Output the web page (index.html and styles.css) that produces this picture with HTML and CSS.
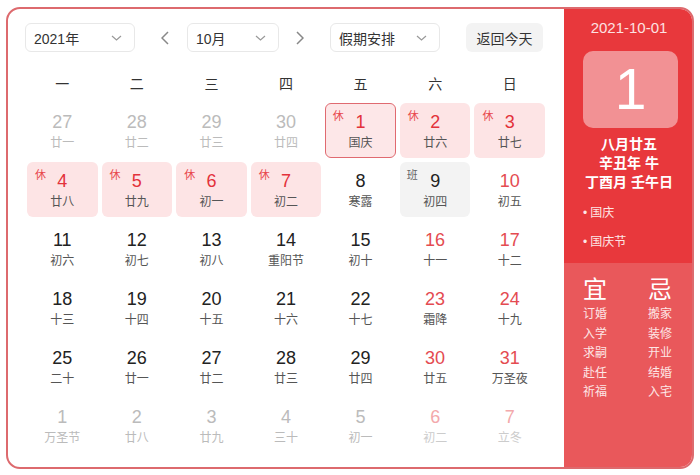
FILE: index.html
```html
<!DOCTYPE html>
<html lang="zh-CN">
<head>
<meta charset="utf-8">
<title>万年历</title>
<link rel="stylesheet" href="styles.css">
</head>
<body>
<div class="cal">
  <div class="main">
    <div class="toolbar">
      <div class="select sel-year"><span>2021年</span><svg class="chev" width="11" height="6" viewBox="0 0 11 6"><path d="M1 1L5.5 5L10 1"/></svg></div>
      <div class="arrow arrow-prev"><svg width="8" height="14" viewBox="0 0 8 14"><path d="M7 1L1 7L7 13"/></svg></div>
      <div class="select sel-month"><span>10月</span><svg class="chev" width="11" height="6" viewBox="0 0 11 6"><path d="M1 1L5.5 5L10 1"/></svg></div>
      <div class="arrow arrow-next"><svg width="8" height="14" viewBox="0 0 8 14"><path d="M1 1L7 7L1 13"/></svg></div>
      <div class="select sel-holiday"><span>假期安排</span><svg class="chev" width="11" height="6" viewBox="0 0 11 6"><path d="M1 1L5.5 5L10 1"/></svg></div>
      <div class="btn-today">返回今天</div>
    </div>
    <div class="weekdays">
      <span>一</span><span>二</span><span>三</span><span>四</span><span>五</span><span>六</span><span>日</span>
    </div>
    <div class="grid">
      <div class="cell other"><span class="num">27</span><span class="lunar">廿一</span></div>
      <div class="cell other"><span class="num">28</span><span class="lunar">廿二</span></div>
      <div class="cell other"><span class="num">29</span><span class="lunar">廿三</span></div>
      <div class="cell other"><span class="num">30</span><span class="lunar">廿四</span></div>
      <div class="cell rest today"><span class="tag">休</span><span class="num">1</span><span class="lunar">国庆</span></div>
      <div class="cell rest"><span class="tag">休</span><span class="num">2</span><span class="lunar">廿六</span></div>
      <div class="cell rest"><span class="tag">休</span><span class="num">3</span><span class="lunar">廿七</span></div>

      <div class="cell rest"><span class="tag">休</span><span class="num">4</span><span class="lunar">廿八</span></div>
      <div class="cell rest"><span class="tag">休</span><span class="num">5</span><span class="lunar">廿九</span></div>
      <div class="cell rest"><span class="tag">休</span><span class="num">6</span><span class="lunar">初一</span></div>
      <div class="cell rest"><span class="tag">休</span><span class="num">7</span><span class="lunar">初二</span></div>
      <div class="cell"><span class="num">8</span><span class="lunar">寒露</span></div>
      <div class="cell work"><span class="tag">班</span><span class="num">9</span><span class="lunar">初四</span></div>
      <div class="cell wkend"><span class="num">10</span><span class="lunar">初五</span></div>

      <div class="cell"><span class="num">11</span><span class="lunar">初六</span></div>
      <div class="cell"><span class="num">12</span><span class="lunar">初七</span></div>
      <div class="cell"><span class="num">13</span><span class="lunar">初八</span></div>
      <div class="cell"><span class="num">14</span><span class="lunar">重阳节</span></div>
      <div class="cell"><span class="num">15</span><span class="lunar">初十</span></div>
      <div class="cell wkend"><span class="num">16</span><span class="lunar">十一</span></div>
      <div class="cell wkend"><span class="num">17</span><span class="lunar">十二</span></div>

      <div class="cell"><span class="num">18</span><span class="lunar">十三</span></div>
      <div class="cell"><span class="num">19</span><span class="lunar">十四</span></div>
      <div class="cell"><span class="num">20</span><span class="lunar">十五</span></div>
      <div class="cell"><span class="num">21</span><span class="lunar">十六</span></div>
      <div class="cell"><span class="num">22</span><span class="lunar">十七</span></div>
      <div class="cell wkend"><span class="num">23</span><span class="lunar">霜降</span></div>
      <div class="cell wkend"><span class="num">24</span><span class="lunar">十九</span></div>

      <div class="cell"><span class="num">25</span><span class="lunar">二十</span></div>
      <div class="cell"><span class="num">26</span><span class="lunar">廿一</span></div>
      <div class="cell"><span class="num">27</span><span class="lunar">廿二</span></div>
      <div class="cell"><span class="num">28</span><span class="lunar">廿三</span></div>
      <div class="cell"><span class="num">29</span><span class="lunar">廿四</span></div>
      <div class="cell wkend"><span class="num">30</span><span class="lunar">廿五</span></div>
      <div class="cell wkend"><span class="num">31</span><span class="lunar">万圣夜</span></div>

      <div class="cell other"><span class="num">1</span><span class="lunar">万圣节</span></div>
      <div class="cell other"><span class="num">2</span><span class="lunar">廿八</span></div>
      <div class="cell other"><span class="num">3</span><span class="lunar">廿九</span></div>
      <div class="cell other"><span class="num">4</span><span class="lunar">三十</span></div>
      <div class="cell other"><span class="num">5</span><span class="lunar">初一</span></div>
      <div class="cell other wkend"><span class="num">6</span><span class="lunar">初二</span></div>
      <div class="cell other wkend"><span class="num">7</span><span class="lunar">立冬</span></div>
    </div>
  </div>
  <aside class="side">
    <div class="side-top">
      <div class="side-date">2021-10-01</div>
      <div class="big-day">1</div>
      <div class="lunar-info">
        <div>八月廿五</div>
        <div>辛丑年 牛</div>
        <div>丁酉月 壬午日</div>
      </div>
      <ul class="fest">
        <li>国庆</li>
        <li>国庆节</li>
      </ul>
    </div>
    <div class="side-bottom">
      <div class="yj-col">
        <div class="yj-head">宜</div>
        <div>订婚</div><div>入学</div><div>求嗣</div><div>赴任</div><div>祈福</div>
      </div>
      <div class="yj-col">
        <div class="yj-head">忌</div>
        <div>搬家</div><div>装修</div><div>开业</div><div>结婚</div><div>入宅</div>
      </div>
    </div>
  </aside>
</div>
</body>
</html>
```
FILE: styles.css
```css
html, body {
  margin: 0;
  padding: 0;
  background: #fff;
}
body {
  font-family: "Liberation Sans", "Noto Sans CJK SC", sans-serif;
}
.cal {
  box-sizing: border-box;
  width: 688px;
  height: 462px;
  margin: 7px 6px;
  border: 2px solid #dd6a6e;
  border-radius: 14px;
  display: flex;
  overflow: hidden;
  background: #fff;
}
.main {
  box-sizing: border-box;
  width: 556px;
  flex: none;
  padding: 14px 0 0 17px;
}
.toolbar {
  display: flex;
  align-items: center;
  height: 29px;
}
.select {
  box-sizing: border-box;
  height: 29px;
  border: 1px solid #e8e8e8;
  border-radius: 6px;
  display: flex;
  align-items: center;
  justify-content: space-between;
  padding: 0 12px 0 8px;
  font-size: 14px;
  color: #333;
}
.chev path, .arrow path {
  fill: none;
  stroke: #999;
  stroke-width: 1.2;
}
.arrow path {
  stroke: #888;
  stroke-width: 1.5;
}
.sel-year { width: 110px; }
.sel-month { width: 92px; }
.sel-holiday { width: 110px; }
.arrow {
  width: 22px;
  height: 29px;
  display: flex;
  align-items: center;
  justify-content: center;
}
.arrow-prev { margin: 0 11px 0 19px; }
.arrow-next { margin: 0 19px 0 10px; }
.btn-today {
  margin-left: 26px;
  width: 77px;
  height: 29px;
  border-radius: 6px;
  background: #f3f3f3;
  font-size: 14px;
  color: #333;
  display: flex;
  align-items: center;
  justify-content: center;
}
.weekdays {
  display: grid;
  grid-template-columns: repeat(7, 1fr);
  column-gap: 4px;
  width: 518px;
  margin: 18px 0 0 2px;
  height: 28px;
  line-height: 28px;
  text-align: center;
  font-size: 14px;
  color: #333;
}
.grid {
  display: grid;
  grid-template-columns: repeat(7, 1fr);
  grid-auto-rows: 55px;
  gap: 4px;
  width: 518px;
  margin: 5px 0 0 2px;
}
.cell {
  position: relative;
  box-sizing: border-box;
  border-radius: 6px;
  text-align: center;
  padding-top: 8px;
}
.num {
  display: block;
  font-size: 18px;
  line-height: 22px;
  color: #222;
}
.lunar {
  display: block;
  font-size: 12px;
  line-height: 18px;
  margin-top: 1px;
  color: #555;
}
.tag {
  position: absolute;
  left: 8px;
  top: 6px;
  font-size: 11px;
  line-height: 14px;
  color: #e8474c;
}
.rest {
  background: #fde4e5;
}
.rest .num {
  color: #e3323b;
}
.today {
  border: 1.5px solid #e06a70;
  background: #fde7e8;
  padding-top: 6.5px;
}
.today .tag {
  left: 6.5px;
  top: 4.5px;
}
.work {
  background: #f3f3f3;
}
.work .tag {
  color: #666;
  left: 7px;
}
.wkend .num {
  color: #e44b51;
}
.other .num,
.other .lunar {
  color: #bbb;
}
.other.wkend .num {
  color: #f3a9ab;
}
.other.wkend .lunar {
  color: #ccc;
}

.side {
  width: 128px;
  flex: none;
  display: flex;
  flex-direction: column;
  color: #fff;
}
.side-top {
  box-sizing: border-box;
  height: 254px;
  background: #e8383c;
  padding-top: 10px;
}
.side-date {
  text-align: center;
  font-size: 15px;
  line-height: 18px;
  color: #fde2e2;
  margin-left: 2px;
}
.big-day {
  width: 95px;
  height: 77px;
  margin: 14px 0 0 19px;
  border-radius: 10px;
  background: rgba(255, 255, 255, 0.45);
  color: #fff;
  font-size: 57px;
  line-height: 77px;
  text-align: center;
}
.lunar-info {
  margin-top: 7px;
  text-align: center;
  font-size: 14px;
  line-height: 19px;
  font-weight: bold;
  color: #fff;
  margin-left: 2px;
}
.fest {
  list-style: none;
  margin: 7px 0 0;
  padding: 0 0 0 19px;
  font-size: 12px;
  line-height: 29px;
  color: #fde6e6;
}
.fest li::before {
  content: "•";
  margin-right: 3px;
}
.side-bottom {
  flex: 1;
  background: #e9585b;
  display: grid;
  grid-template-columns: 65px 1fr;
  padding: 12px 0 0 19px;
  font-size: 12px;
  line-height: 19.5px;
  color: #fde6e6;
}
.yj-head {
  font-size: 24px;
  line-height: 30px;
  color: #fff;
}
```
